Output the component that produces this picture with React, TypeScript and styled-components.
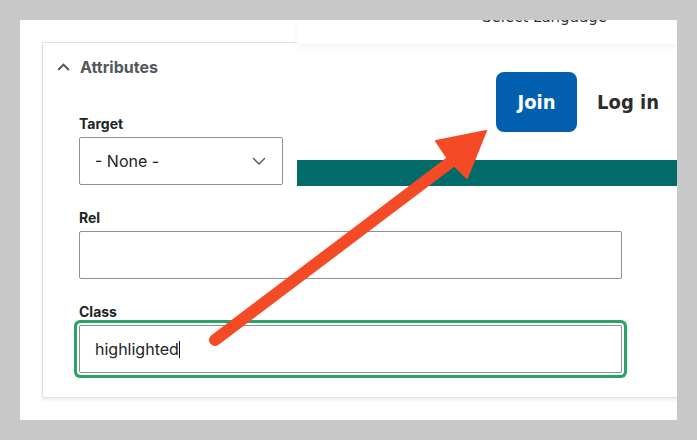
import React from "react";
import styled, { createGlobalStyle } from "styled-components";

const Global = createGlobalStyle`
  html, body { margin: 0; padding: 0; background: #c8c8c8; }
  body { font-family: Inter, "Noto Sans", sans-serif; }
`;

const Page = styled.div`
  position: relative;
  width: 697px;
  height: 440px;
  padding: 20px;
  box-sizing: border-box;
  background: #c8c8c8;
`;

const Frame = styled.div`
  position: relative;
  width: 657px;
  height: 400px;
  background: #fff;
  overflow: hidden;
  padding: 22px 0 0 22px;
  box-sizing: border-box;
`;

const Card = styled.section`
  width: 700px;
  border: 1px solid #e1e1e3;
  box-shadow: 0 2px 3px rgba(0, 0, 0, 0.08);
  background: #fff;
`;

const CardHeader = styled.div`
  height: 48px;
  display: flex;
  align-items: center;
  gap: 10px;
  padding-left: 14px;
  font-family: Inter, "Noto Sans", sans-serif;
  font-weight: 700;
  font-size: 16px;
  color: #55565b;
`;

const CardBody = styled.div`
  display: flex;
  flex-direction: column;
  gap: 24px;
  padding: 24px 0 24px 36px;
`;

const Field = styled.div`
  display: flex;
  flex-direction: column;
`;

const Label = styled.label`
  font-family: Inter, "Noto Sans", sans-serif;
  font-weight: 700;
  font-size: 14px;
  line-height: 18px;
  color: #222327;
  margin-bottom: 4px;
`;

const SelectBox = styled.div`
  width: 204px;
  height: 48px;
  box-sizing: border-box;
  border: 1px solid #8e8e95;
  border-radius: 2px;
  display: flex;
  align-items: center;
  justify-content: space-between;
  padding: 0 16px 0 15px;
  font-size: 16px;
  color: #222327;
`;

const TextBox = styled.div<{ $focused?: boolean }>`
  width: 543px;
  height: 48px;
  box-sizing: border-box;
  border: 1px solid #8e8e95;
  border-radius: 2px;
  display: flex;
  align-items: center;
  padding: 0 15px;
  font-size: 16px;
  color: #222327;
  box-shadow: ${(p) => (p.$focused ? "0 0 0 2px #fff, 0 0 0 5px #27a567" : "none")};
`;

const Caret = styled.span`
  display: inline-block;
  width: 1px;
  height: 17px;
  background: #111;
  margin-left: 0;
`;

const Site = styled.div`
  position: absolute;
  top: 0;
  left: 277px;
  width: 380px;
  height: 166px;
  background: #fff;
  display: flex;
  flex-direction: column;
`;

const SiteHeader = styled.div`
  height: 24px;
  flex: none;
  padding-left: 185px;
  box-shadow: 0 3px 6px rgba(0, 0, 0, 0.05);
  position: relative;
  z-index: 1;
  font-family: "DejaVu Sans", sans-serif;
  font-size: 15px;
  line-height: 16px;
  color: #333;
`;

const LangText = styled.div`
  margin-top: -11px;
`;

const SiteNav = styled.div`
  flex: 1;
  display: flex;
  align-items: center;
  justify-content: flex-end;
  gap: 20px;
  padding-right: 18px;
`;

const JoinButton = styled.div`
  width: 81px;
  height: 60px;
  border-radius: 8px;
  background: #025fb0;
  color: #fff;
  display: flex;
  align-items: center;
  justify-content: center;
  font-family: "DejaVu Sans Condensed", "DejaVu Sans", sans-serif;
  font-weight: 700;
  font-size: 20px;
`;

const LoginLink = styled.div`
  font-family: "DejaVu Sans Condensed", "DejaVu Sans", sans-serif;
  font-weight: 700;
  font-size: 20px;
  color: #2d2d2d;
`;

const TealBar = styled.div`
  height: 26px;
  flex: none;
  background: #016b6a;
`;

const ArrowLayer = styled.svg`
  position: absolute;
  left: 0;
  top: 0;
  pointer-events: none;
`;

const ChevronUp = () => (
  <svg width="13" height="8" viewBox="0 0 13 8">
    <path d="M1.2 7L6.5 1.6 11.8 7" fill="none" stroke="#55565b" strokeWidth="2" />
  </svg>
);

const ChevronDown = () => (
  <svg width="14" height="8" viewBox="0 0 14 8">
    <path d="M1 1L7 7 13 1" fill="none" stroke="#55565b" strokeWidth="1.3" />
  </svg>
);

export default function App() {
  return (
    <>
      <Global />
      <Page>
        <Frame>
          <Card>
            <CardHeader>
              <ChevronUp />
              <span>Attributes</span>
            </CardHeader>
            <CardBody>
              <Field>
                <Label>Target</Label>
                <SelectBox>
                  <span>- None -</span>
                  <ChevronDown />
                </SelectBox>
              </Field>
              <Field>
                <Label>Rel</Label>
                <TextBox />
              </Field>
              <Field>
                <Label>Class</Label>
                <TextBox $focused>
                  <span>highlighted</span>
                  <Caret />
                </TextBox>
              </Field>
            </CardBody>
          </Card>
          <Site>
            <SiteHeader>
              <LangText>Select Language</LangText>
            </SiteHeader>
            <SiteNav>
              <JoinButton>Join</JoinButton>
              <LoginLink>Log in</LoginLink>
            </SiteNav>
            <TealBar />
          </Site>
        </Frame>
        <ArrowLayer width="697" height="440" viewBox="0 0 697 440">
          <line x1="215" y1="340" x2="452" y2="161" stroke="#f44a25" strokeWidth="12" strokeLinecap="round" />
          <polygon points="486,131 436,141 446,156 456,167 467,178" fill="#f44a25" strokeLinejoin="round" stroke="#f44a25" strokeWidth="2" />
        </ArrowLayer>
      </Page>
    </>
  );
}
